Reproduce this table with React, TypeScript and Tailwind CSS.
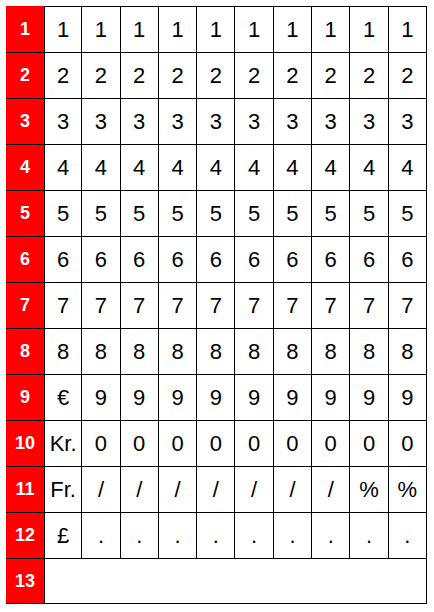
const rows: Array<Array<string>> = [
  ['1', '1', '1', '1', '1', '1', '1', '1', '1', '1'],
  ['2', '2', '2', '2', '2', '2', '2', '2', '2', '2'],
  ['3', '3', '3', '3', '3', '3', '3', '3', '3', '3'],
  ['4', '4', '4', '4', '4', '4', '4', '4', '4', '4'],
  ['5', '5', '5', '5', '5', '5', '5', '5', '5', '5'],
  ['6', '6', '6', '6', '6', '6', '6', '6', '6', '6'],
  ['7', '7', '7', '7', '7', '7', '7', '7', '7', '7'],
  ['8', '8', '8', '8', '8', '8', '8', '8', '8', '8'],
  ['€', '9', '9', '9', '9', '9', '9', '9', '9', '9'],
  ['Kr.', '0', '0', '0', '0', '0', '0', '0', '0', '0'],
  ['Fr.', '/', '/', '/', '/', '/', '/', '/', '%', '%'],
  ['£', '.', '.', '.', '.', '.', '.', '.', '.', '.'],
]

const App = () => {
  return (
    <div className="h-[612px] w-[434px] bg-white pl-[6px] pt-[6px] font-['Liberation_Sans',Arial,sans-serif]">
      <div className="grid w-[421px] grid-cols-[38px_repeat(10,1fr)] grid-rows-[repeat(13,46px)]">
        {rows.map((cells, r) => (
          <div key={r} className="contents">
            <div
              className={`flex items-center justify-center border-black bg-[#ff0000] text-[18px] font-bold text-white ${r > 0 ? 'border-t' : ''}`}
            >
              {r + 1}
            </div>
            {cells.map((c, i) => (
              <div
                key={i}
                className={`flex items-center justify-center border-t border-r border-black text-[22px] text-black ${i === 0 ? 'border-l' : ''}`}
              >
                {c}
              </div>
            ))}
          </div>
        ))}
        <div className="flex items-center justify-center border-y border-black bg-[#ff0000] text-[18px] font-bold text-white">
          13
        </div>
        <div className="col-span-10 border border-black" />
      </div>
    </div>
  )
}

export default App
